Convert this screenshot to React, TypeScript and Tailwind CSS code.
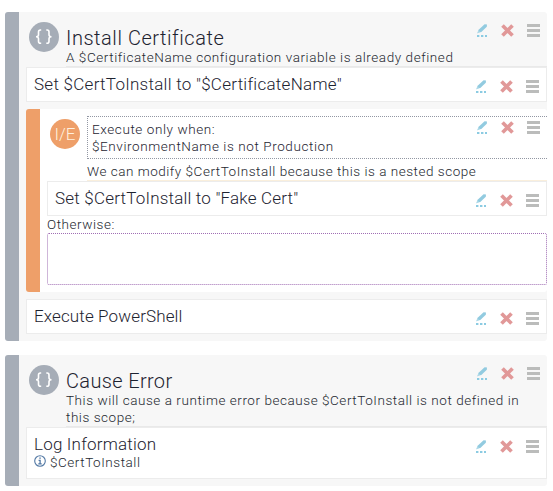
import type { ReactNode } from "react";

function Actions({ className = "" }: { className?: string }) {
  return (
    <div className={`flex h-[13px] w-[64px] shrink-0 items-start ${className}`}>
      <svg width="11" height="13" viewBox="0 0 11 13" className="mr-[13px] shrink-0">
        <path d="M.8 8.8 1.6 5.7 7.6.3 10 .6 9.8 2.7 4.3 7.9Z" fill="#92cbe0" />
        <path d="M0 9.4 1.4 6.3 3 8Z" fill="#add9e8" />
        <path d="M0 11h2v2H0zM4 11h2v2H4zM8 11h2v2H8z" fill="#8bcbe2" />
        <path d="M2 11h1v2H2zM6 11h1v2H6z" fill="#d0e9f2" />
      </svg>
      <svg width="13" height="13" viewBox="0 0 13 13" className="mr-[13px] shrink-0">
        <path d="m1.5 1.5 10 10M11.5 1.5l-10 10" stroke="#e19898" strokeWidth="3.7" />
      </svg>
      <svg width="14" height="13" viewBox="0 0 14 13" className="shrink-0">
        <path d="M0 0h13v3H0zM0 5h13v3H0zM0 10h13v3H0z" fill="#bbbcbb" />
      </svg>
    </div>
  );
}

function Braces() {
  return (
    <div className="flex size-[30px] shrink-0 items-center justify-center rounded-full bg-[#a6adb7]">
      <svg width="18" height="16" viewBox="0 0 18 16" fill="none" stroke="#fff" strokeWidth="1.6">
        <path d="M6.2 1H5.4Q3.5 1 3.5 3v2.7Q3.5 7.7 1 7.7 3.5 7.7 3.5 9.8v2.5q0 2 1.9 2h.8M11.3 1h.8Q14 1 14 3v2.7q0 2 2.5 2Q14 7.7 14 9.8v2.5q0 2-1.9 2h-.8" />
      </svg>
    </div>
  );
}

function Row({ children, className }: { children: ReactNode; className: string }) {
  return (
    <div className={`flex justify-between border border-[#ececec] bg-white pl-[7px] pt-[6px] ${className}`}>
      <div className="whitespace-nowrap text-[17px] leading-[20px]">{children}</div>
      <Actions className="mr-[6px] mt-[6px]" />
    </div>
  );
}

function Header({ title, titleClass, children, className }: { title: string; titleClass: string; children: ReactNode; className: string }) {
  return (
    <div className={`flex pl-[3px] pt-[10px] ${className}`}>
      <Braces />
      <div className="ml-[7px] flex-1 border-b border-[#e9e9e9]">
        <div className="flex h-[27px] justify-between">
          <h2 className={`mt-[4px] whitespace-nowrap text-[20px] leading-[24px] ${titleClass}`}>{title}</h2>
          <Actions className="mr-[6px] mt-[2px]" />
        </div>
        {children}
      </div>
    </div>
  );
}

export default function App() {
  return (
    <main className="h-[491px] w-[553px] bg-white pl-[5px] pt-[12px] font-['Roboto',sans-serif] font-light text-[#1d2330]">
      <section className="h-[329px] w-[542px] rounded-[3px] border-l-[14px] border-[#a6adb7] bg-[#f7f7f7] pl-[7px]">
        <Header title="Install Certificate" titleClass="tracking-[0.55px]" className="h-[55px]">
          <p className="whitespace-nowrap text-[13.5px] leading-[17px] tracking-[0.57px] text-[#242830]">
            A $CertificateName configuration variable is already defined
          </p>
        </Header>
        <Row className="h-[35px]">
          <span className="tracking-[0.27px]">Set $CertToInstall to "$CertificateName"</span>
        </Row>
        <div className="mt-[7px] h-[183px] rounded-[3px] border-l-[14px] border-[#ee9f69] bg-white pl-[7px] pt-[7px]">
          <div className="flex h-[65px] pl-[3px]">
            <div className="mt-[3px] flex size-[30px] shrink-0 items-center justify-center rounded-full bg-[#ee9f69] pt-px text-[17px] text-[#fff0df]">
              I/E
            </div>
            <div className="ml-[7px] flex-1 border-b border-[#faefdc] text-[13.5px] leading-[17px]">
              <div className="flex h-[43px] justify-between border-y border-l border-dotted border-[#9297a3] pl-[4px] pt-[4px]">
                <p className="whitespace-nowrap tracking-[0.59px]">
                  Execute only when:
                  <br />
                  $EnvironmentName is not Production
                </p>
                <Actions className="mr-[6px]" />
              </div>
              <p className="mt-[4px] whitespace-nowrap tracking-[0.52px] text-[#242830]">
                We can modify $CertToInstall because this is a nested scope
              </p>
            </div>
          </div>
          <Row className="h-[35px]">
            <span className="tracking-[0.2px]">Set $CertToInstall to "Fake Cert"</span>
          </Row>
          <div className="h-[17px] text-[13.5px] leading-[17px] tracking-[0.55px] text-[#242830]">Otherwise:</div>
          <div className="h-[52px] rounded-[2px] border border-dotted border-[#a06eb4]" />
        </div>
        <Row className="mt-[7px] h-[35px]">
          <span className="tracking-[0.13px]">Execute PowerShell</span>
        </Row>
      </section>

      <section className="mt-[14px] h-[131px] w-[542px] rounded-[3px] border-l-[14px] border-[#a6adb7] bg-[#f7f7f7] pl-[7px]">
        <Header title="Cause Error" titleClass="tracking-[0.35px]" className="h-[72px]">
          <p className="whitespace-nowrap text-[13.5px] leading-[17px] tracking-[0.55px] text-[#242830]">
            This will cause a runtime error because $CertToInstall is not defined in
            <br />
            this scope;
          </p>
        </Header>
        <Row className="h-[52px]">
          <span className="tracking-[0.2px]">Log Information</span>
          <div className="flex items-center text-[13.5px] leading-[17px] text-[#242830]">
            <svg width="12" height="12" viewBox="0 0 12 12" className="mr-[4px] -mt-[3px]" fill="none" stroke="#5278a4">
              <circle cx="6" cy="6" r="5.3" strokeWidth="1.1" />
              <path d="M4.6 5.3h1.5v3.2M4.3 8.8h3.4M5.3 3.1h1.5" strokeWidth="1.3" />
            </svg>
            <span className="tracking-[0.54px]">$CertToInstall</span>
          </div>
        </Row>
      </section>
    </main>
  );
}
